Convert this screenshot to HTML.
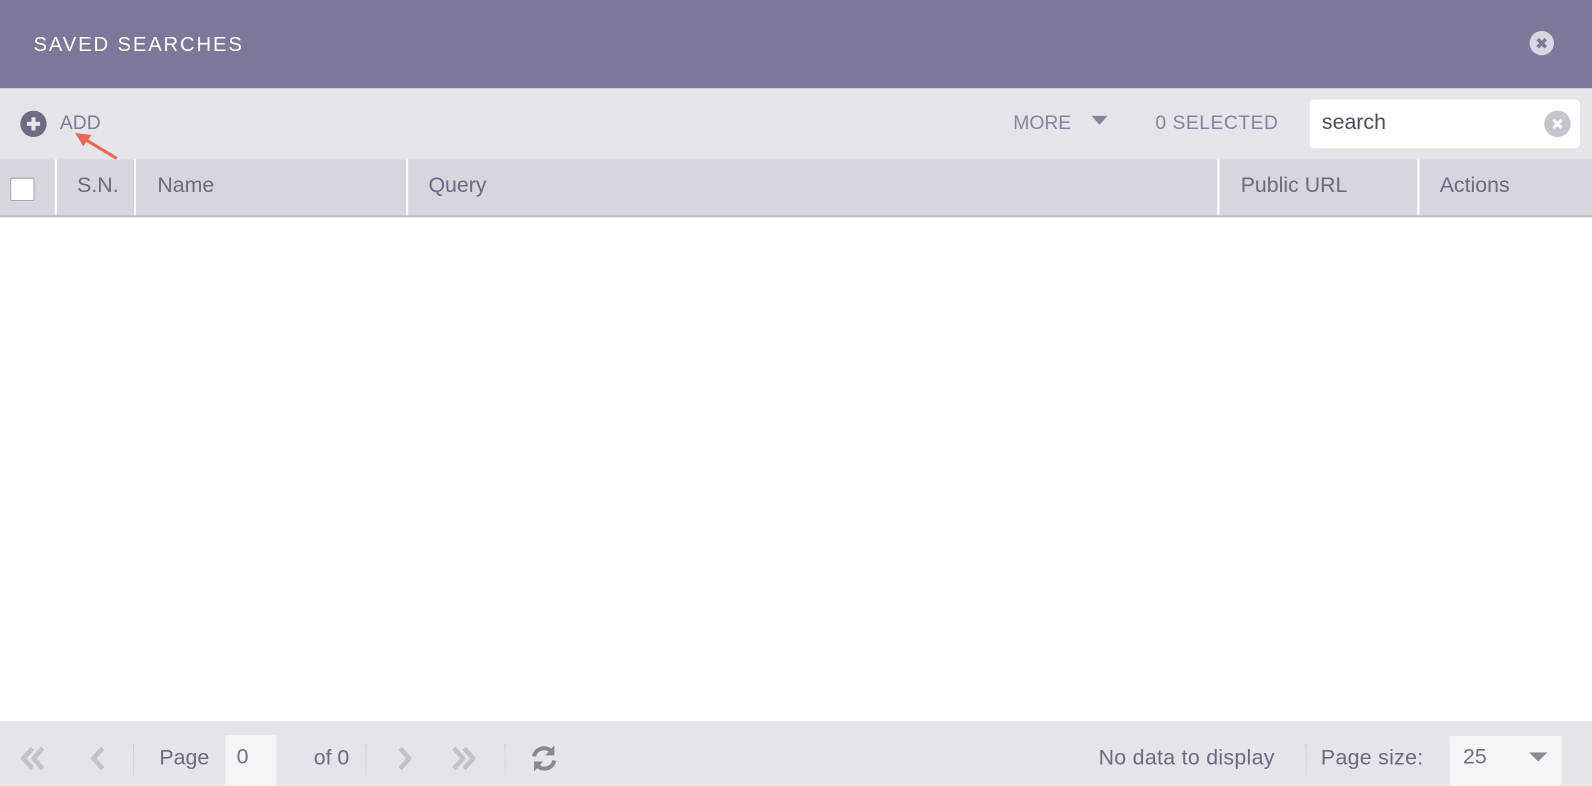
<!DOCTYPE html>
<html><head><style>
*{margin:0;padding:0;box-sizing:border-box}
body{width:1592px;height:786px;overflow:hidden;background:#fff;font-family:"Liberation Sans",sans-serif;position:relative}
#w{position:absolute;left:0;top:0;width:1568px;height:774px;transform:scale(1.01531);transform-origin:0 0}
.a{position:absolute}
.t{color:#6b6a7e;font-size:20px;white-space:nowrap}
.sep{position:absolute;width:1px;height:30px;border-left:1px dotted #c8c8ce}
</style></head><body><div id="w">
<div class="a" style="left:0;top:0;width:1568px;height:87px;background:#7b7899"></div>
<div class="a" style="left:33px;top:33px;color:#fff;font-size:20px;letter-spacing:1.8px">SAVED SEARCHES</div>
<svg class="a" style="left:1506px;top:30px" width="25" height="25"><circle cx="12.5" cy="12.5" r="12" fill="#d7d7e2"/><path d="M8.5 8.5L16.5 16.5M16.5 8.5L8.5 16.5" stroke="#7b7899" stroke-width="3.5"/></svg>

<div class="a" style="left:0;top:87px;width:1568px;height:70px;background:#e4e5ea"></div>
<svg class="a" style="left:20px;top:109px" width="26" height="26"><circle cx="13" cy="13" r="13" fill="#6d6c80"/><path d="M13 6.5V19.5M6.5 13H19.5" stroke="#e4e5ea" stroke-width="4"/></svg>
<div class="a t" style="left:59px;top:111px;font-size:19px;color:#7d7c90">ADD</div>
<svg class="a" style="left:70px;top:125px" width="50" height="35"><path d="M45 31L10 10" stroke="#f26454" stroke-width="3"/><path d="M4 6L20 8L12 19Z" fill="#f26454"/></svg>
<div class="a t" style="left:998px;top:111px;font-size:19px;color:#85849a">MORE</div>
<svg class="a" style="left:1075px;top:114px" width="16" height="10"><path d="M0 0H16L8 9Z" fill="#85849a"/></svg>
<div class="a t" style="left:1138px;top:111px;font-size:19px;color:#85849a;letter-spacing:0.5px">0 SELECTED</div>
<div class="a" style="left:1290px;top:98px;width:266px;height:48px;background:#fff;border-radius:4px"></div>
<div class="a t" style="left:1302px;top:109px;font-size:21px;color:#4c4b5e">search</div>
<svg class="a" style="left:1521px;top:109px" width="26" height="26"><circle cx="13" cy="13" r="13" fill="#c4c4cc"/><path d="M9 9L17 17M17 9L9 17" stroke="#fff" stroke-width="3"/></svg>

<div class="a" style="left:0;top:157px;width:1568px;height:57px;background:#d5d6de;border-bottom:2px solid #bfbfc8"></div>
<div class="a" style="left:10px;top:175px;width:24px;height:23px;background:#fff;border:1px solid #a6a6b0;border-radius:2px"></div>
<div class="a" style="left:54px;top:157px;width:2px;height:55px;background:#fff"></div>
<div class="a" style="left:132px;top:157px;width:2px;height:55px;background:#fff"></div>
<div class="a" style="left:400px;top:157px;width:2px;height:55px;background:#fff"></div>
<div class="a" style="left:1199px;top:157px;width:2px;height:55px;background:#fff"></div>
<div class="a" style="left:1396px;top:157px;width:2px;height:55px;background:#fff"></div>
<div class="a t" style="left:76px;top:171px;font-size:21px">S.N.</div>
<div class="a t" style="left:155px;top:171px;font-size:21px">Name</div>
<div class="a t" style="left:422px;top:171px;font-size:21px">Query</div>
<div class="a t" style="left:1222px;top:171px;font-size:21px">Public URL</div>
<div class="a t" style="left:1418px;top:171px;font-size:21px">Actions</div>

<div class="a" style="left:0;top:710px;width:1568px;height:64px;background:#e4e5ea"></div>
<svg class="a" style="left:16px;top:733px" width="100" height="30"><path d="M16 4L7 14L16 24M26 4L17 14L26 24" stroke="#c2c2c6" stroke-width="4.5" fill="none"/><path d="M85 4L76 14L85 24" stroke="#c2c2c6" stroke-width="4.5" fill="none"/></svg>
<div class="sep" style="left:131px;top:733px"></div>
<div class="a t" style="left:157px;top:735px;font-size:21px">Page</div>
<div class="a" style="left:222px;top:724px;width:50px;height:50px;background:#f5f5f7"></div>
<div class="a t" style="left:233px;top:734px;font-size:21px;color:#6e6d8c">0</div>
<div class="a t" style="left:309px;top:735px;font-size:21px">of 0</div>
<div class="sep" style="left:360px;top:733px"></div>
<svg class="a" style="left:385px;top:733px" width="100" height="30"><path d="M9 4L18 14L9 24" stroke="#c2c2c6" stroke-width="4.5" fill="none"/><path d="M62 4L71 14L62 24M72 4L81 14L72 24" stroke="#c2c2c6" stroke-width="4.5" fill="none"/></svg>
<div class="sep" style="left:497px;top:733px"></div>
<svg class="a" style="left:521px;top:732px" width="30" height="30"><path d="M5 13A10 10 0 0 1 22 8" stroke="#88888e" stroke-width="4" fill="none"/><path d="M25 2V12H16Z" fill="#88888e"/><path d="M25 17A10 10 0 0 1 8 22" stroke="#88888e" stroke-width="4" fill="none"/><path d="M5 28V18H14Z" fill="#88888e"/></svg>
<div class="a t" style="left:1082px;top:735px;font-size:21px;letter-spacing:0.3px">No data to display</div>
<div class="sep" style="left:1286px;top:733px"></div>
<div class="a t" style="left:1301px;top:735px;font-size:21px;letter-spacing:0.3px">Page size:</div>
<div class="a" style="left:1428px;top:725px;width:110px;height:49px;background:#f5f5f7"></div>
<div class="a t" style="left:1441px;top:734px;font-size:21px;color:#6e6d8c">25</div>
<svg class="a" style="left:1506px;top:741px" width="18" height="10"><path d="M0 0H18L9 9Z" fill="#8a8a92"/></svg>
</div></body></html>
